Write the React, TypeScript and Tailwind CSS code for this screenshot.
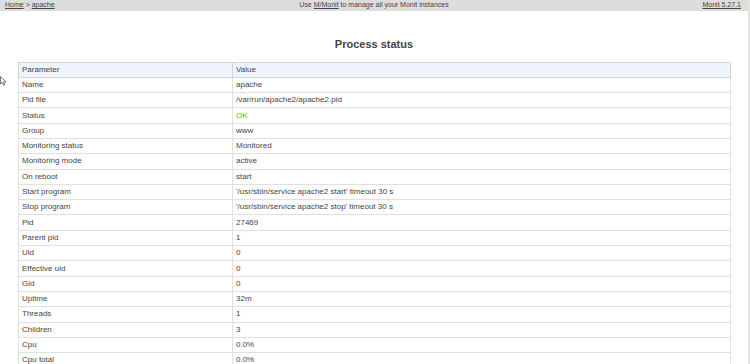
const rows: [string, string][] = [
  ["Name", "apache"],
  ["Pid file", "/var/run/apache2/apache2.pid"],
  ["Status", "OK"],
  ["Group", "www"],
  ["Monitoring status", "Monitored"],
  ["Monitoring mode", "active"],
  ["On reboot", "start"],
  ["Start program", "'/usr/sbin/service apache2 start' timeout 30 s"],
  ["Stop program", "'/usr/sbin/service apache2 stop' timeout 30 s"],
  ["Pid", "27469"],
  ["Parent pid", "1"],
  ["Uid", "0"],
  ["Effective uid", "0"],
  ["Gid", "0"],
  ["Uptime", "32m"],
  ["Threads", "1"],
  ["Children", "3"],
  ["Cpu", "0.0%"],
  ["Cpu total", "0.0%"],
];

export default function App() {
  return (
    <div className="flex h-[364px] w-[750px] overflow-hidden bg-white font-['Liberation_Sans',Arial,sans-serif] text-[8px] text-[#444]">
      <div className="relative flex w-[748px] flex-col">
        <div className="grid h-[19px] grid-cols-3 items-center bg-[#dddddd] px-[5px] text-[7px] text-[#444]">
          <div>
            <span className="underline">Home</span> &gt; <span className="underline">apache</span>
          </div>
          <div className="text-center whitespace-nowrap">
            Use <span className="underline">M/Monit</span> to manage all your Monit instances
          </div>
          <div className="pr-[2px] text-right">
            <span className="underline">Monit 5.27.1</span>
          </div>
        </div>

        <h1 className="mt-[27px] mb-[11px] text-center text-[11px] font-bold leading-[13px] text-[#444]">
          Process status
        </h1>

        <svg className="absolute left-0 top-[76px]" width="7" height="10" viewBox="0 0 7 10">
          <path d="M0.5 0.5 L0.5 8 L2.3 6.3 L3.6 9.3 L4.8 8.8 L3.6 5.9 L6 5.9 Z" fill="#fff" stroke="#555" strokeWidth="0.8" />
        </svg>

        <div className="ml-[18px] w-[713px]">
          <table className="w-full border-collapse border border-[#d4d4d4]">
            <thead>
              <tr className="h-[15.3px] bg-[#edf4fd]">
                <th className="w-[214px] border border-[#d4d4d4] px-[3px] text-left font-normal leading-[10px]">Parameter</th>
                <th className="border border-[#d4d4d4] px-[3px] text-left font-normal leading-[10px]">Value</th>
              </tr>
            </thead>
            <tbody>
              {rows.map(([k, v]) => (
                <tr key={k} className="h-[15.3px]">
                  <td className="border border-[#e0e0e0] px-[3px] leading-[10px]">{k}</td>
                  <td className={`border border-[#e0e0e0] px-[3px] leading-[10px] ${v === "OK" ? "text-[#00e600]" : ""}`}>{v}</td>
                </tr>
              ))}
            </tbody>
          </table>
        </div>
      </div>
      <div className="w-[2px] bg-[#e4e4e4]" />
    </div>
  );
}
